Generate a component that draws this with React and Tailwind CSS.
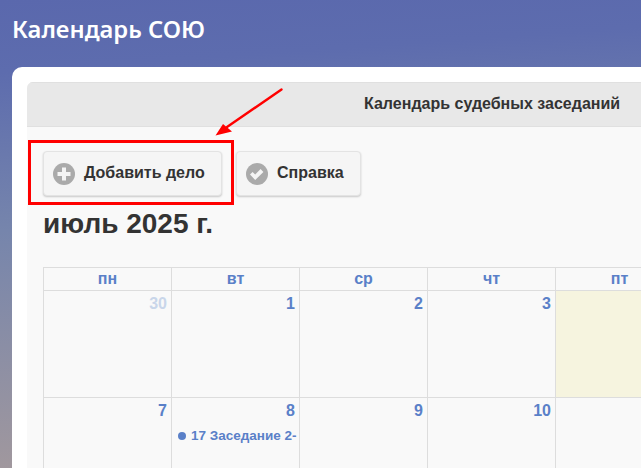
const days = ["пн", "вт", "ср", "чт", "пт"];
const row1 = ["30", "1", "2", "3", ""];
const row2 = ["7", "8", "9", "10", ""];

function Btn({ icon, label, w }) {
  return (
    <button className={`flex items-center h-[45px] rounded-[4px] border border-[#e3e3e3] bg-[#f5f5f5] shadow-[0_1px_2px_rgba(0,0,0,0.2)] pl-[9px] text-[#333] font-bold text-[16px] ${w}`}>
      {icon}
      <span className="ml-[9px] pb-[2px]">{label}</span>
    </button>
  );
}

const Plus = (
  <svg width="22" height="22" viewBox="0 0 22 22">
    <circle cx="11" cy="11" r="11" fill="#aaaaaa" />
    <path d="M9 4.5h4V9h4.5v4H13v4.5H9V13H4.5V9H9z" fill="#f5f5f5" />
  </svg>
);
const Check = (
  <svg width="22" height="22" viewBox="0 0 22 22">
    <circle cx="11" cy="11" r="11" fill="#aaaaaa" />
    <path d="M4 11.5l2.6-2.6 2.6 2.6 5.4-5.4 2.8 2.8-8.2 8z" fill="#f5f5f5" />
  </svg>
);

export default function App() {
  return (
    <div className="relative h-[468px] w-[641px] overflow-hidden bg-[linear-gradient(176deg,#5a68ad_0%,#5d6cae_14%,#7685ac_45%,#a89b9b_100%)] font-['Liberation_Sans',Arial,sans-serif]">
      <div className="h-[67px] pl-3 pt-[11px] text-white text-[23.75px] leading-[36px] font-semibold font-['Noto_Sans',sans-serif]">
        Календарь СОЮ
      </div>
      <div className="ml-3 w-[700px] h-[500px] bg-white rounded-tl-[10px] pt-[15px] pl-[15px]">
        <div className="h-full bg-[#f9f9f9] rounded-tl-[6px] overflow-hidden">
          <div className="h-[45px] bg-[#e8e8e8] border-y border-[#e0e0e0] flex items-center pl-[337px] pb-[2px] text-[#333] font-bold text-[16px]">
            Календарь судебных заседаний
          </div>
          <div className="pl-4 pt-[24px] flex gap-[14px]">
            <Btn icon={Plus} label="Добавить дело" w="w-[179px]" />
            <Btn icon={Check} label="Справка" w="w-[125px]" />
          </div>
          <div className="pl-4 pt-[9px] h-[71px] text-[#333] font-bold text-[28px] leading-[38px]">
            июль 2025 г.
          </div>
          <div className="ml-4 grid grid-cols-[repeat(5,128px)] border-l border-t border-[#dddddd] text-[#5a80c8] font-bold">
            {days.map((d) => (
              <div key={d} className="h-[23px] border-r border-b border-[#dddddd] flex items-center justify-center text-[16px]">
                {d}
              </div>
            ))}
            {row1.map((d, i) => (
              <div key={i} className={`h-[107px] border-r border-b border-[#dddddd] pr-[4px] pt-[4px] text-right text-[16px] leading-[18px] ${i === 4 ? "bg-[#f6f4df]" : ""} ${i === 0 ? "text-[#c9d6ea]" : ""}`}>
                {d}
              </div>
            ))}
            {row2.map((d, i) => (
              <div key={i} className="h-[107px] border-r border-b border-[#dddddd] pt-[4px] text-[16px] leading-[18px]">
                <div className="text-right pr-[4px]">{d}</div>
                {d === "8" && (
                  <div className="flex items-center pl-[6px] mt-[8px] text-[13.5px] leading-[16px] whitespace-nowrap overflow-hidden">
                    <span className="w-[8px] h-[8px] rounded-full bg-[#5a80c8] mr-[5px] shrink-0" />
                    17 Заседание 2-
                  </div>
                )}
              </div>
            ))}
          </div>
        </div>
      </div>
      <div className="absolute left-[28px] top-[140px] w-[206px] h-[65px] border-[3px] border-[#ff0000]" />
      <svg className="absolute left-[210px] top-[85px]" width="80" height="55" viewBox="0 0 80 55">
        <path d="M71.5 4.5 L17 42" stroke="#ff0000" strokeWidth="2.4" strokeLinecap="round" fill="none" />
        <path d="M5.5 50.5 L13 39 L22 46.5 Z" fill="#ff0000" />
      </svg>
    </div>
  );
}
